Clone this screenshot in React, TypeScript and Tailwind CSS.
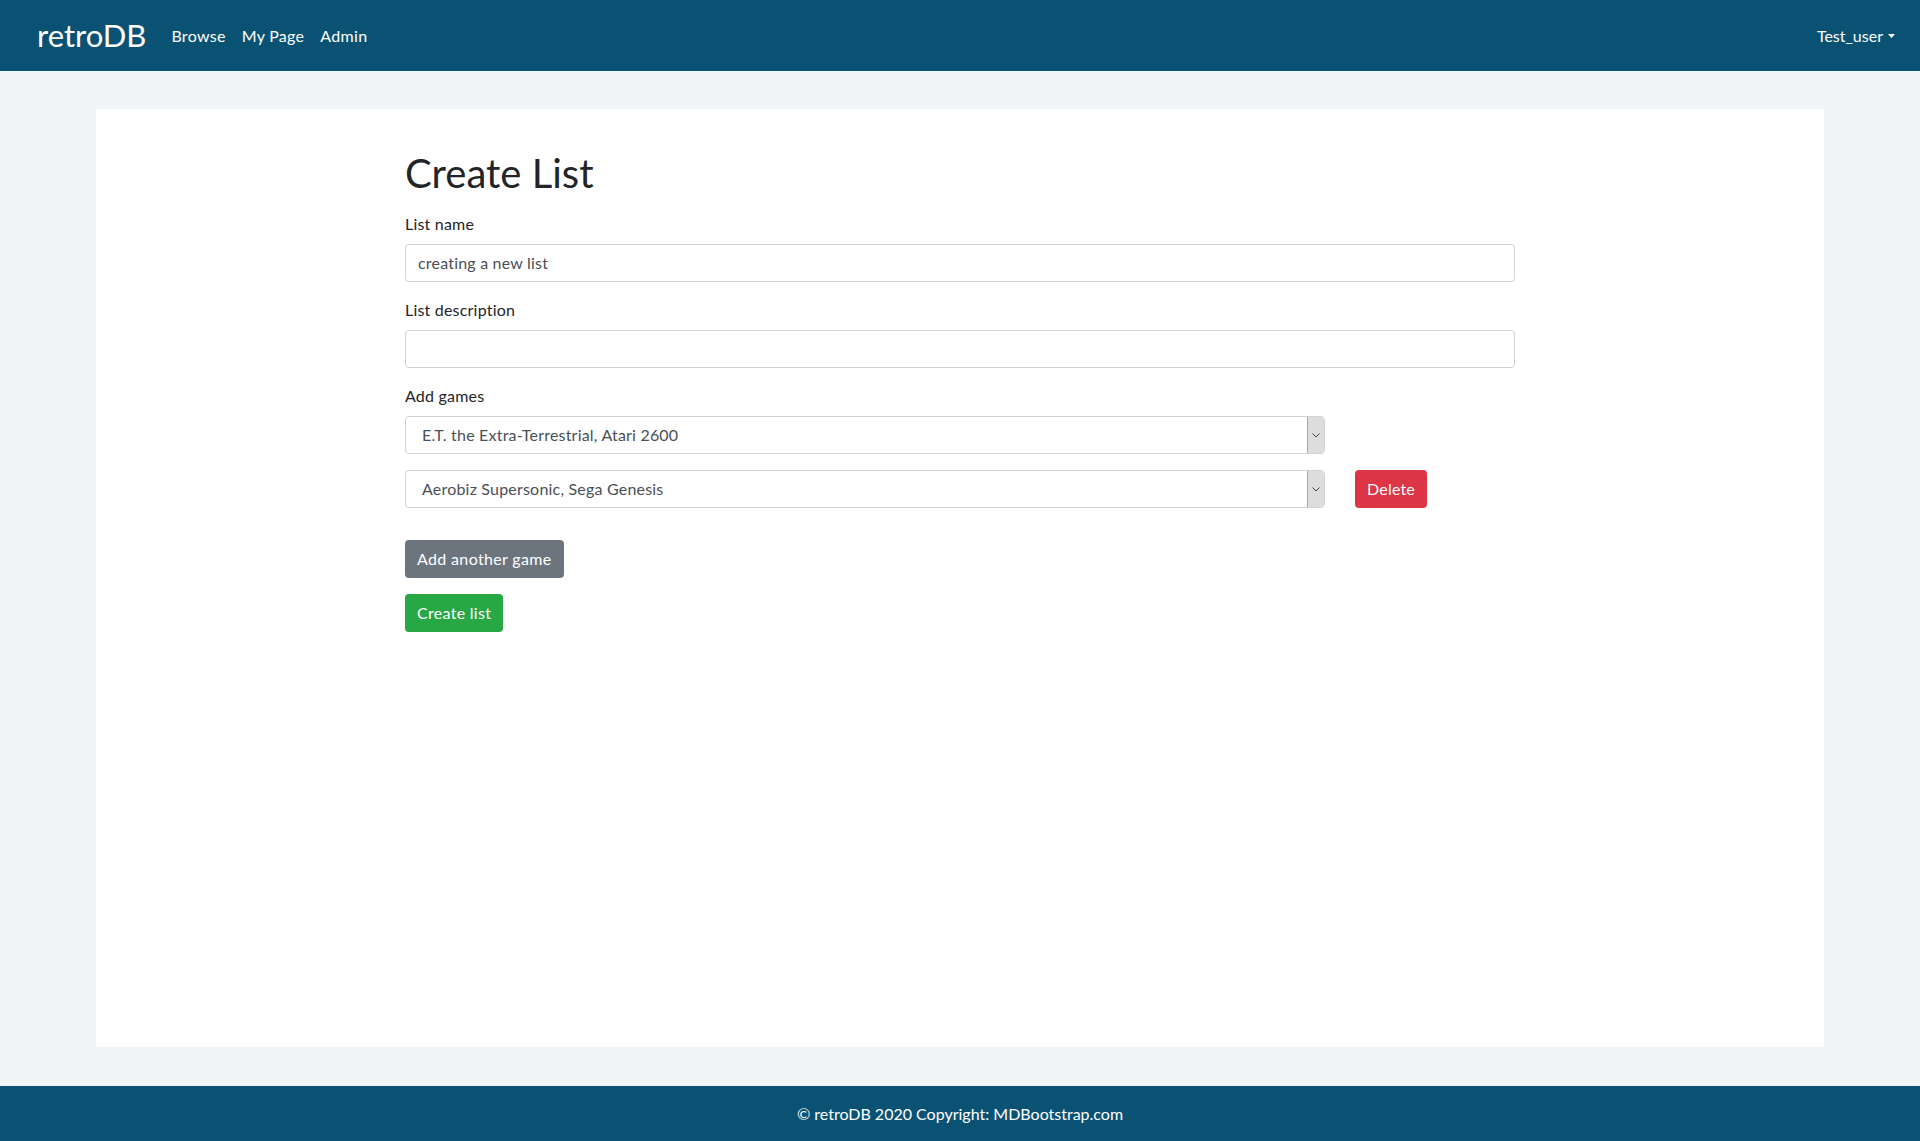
import React from "react";

// Faux native select, matching the old-style dropdown in the shot
const GameSelect = ({ value }: { value: string }) => {
    return (
        <div className="w-[920px] h-[38px] flex items-stretch border border-[#ced4da] rounded-[4px] bg-white">
            <div className="flex-1 flex items-center pl-[16px] text-[#495057] text-base tracking-[0.2px]">
                {value}
            </div>
            <div className="w-[17px] flex items-center justify-center bg-[#dddddd] border-l border-[#a6a6a6] rounded-r-[3px]">
                <svg width="8" height="5" viewBox="0 0 8 5" fill="none" xmlns="http://www.w3.org/2000/svg">
                    <path d="M0.5 0.5L4 4L7.5 0.5" stroke="#444" strokeWidth="1" />
                </svg>
            </div>
        </div>
    );
};

const Field = ({ label, value }: { label: string; value: string }) => {
    return (
        <div className="mb-4">
            <label className="block leading-6 mb-2 tracking-[0.2px]">{label}</label>
            <div className="h-[38px] flex items-center px-3 border border-[#ced4da] rounded-[4px] text-[#495057] bg-white tracking-[0.2px]">
                {value}
            </div>
        </div>
    );
};

export default function App() {
    return (
        <div className="min-h-screen flex flex-col bg-[#f1f5f8] text-[#212529] text-base font-['Lato','Open_Sans',sans-serif]">
            <nav className="h-[71px] shrink-0 bg-[#0a5274] text-white flex items-center pl-[37px] pr-[25px]">
                <span className="text-[31px] leading-none mr-[17px]">retroDB</span>
                <a className="px-2 tracking-[0.3px]">Browse</a>
                <a className="px-2 tracking-[0.3px]">My Page</a>
                <a className="px-2 tracking-[0.3px]">Admin</a>
                <div className="ml-auto flex items-center gap-[5px]">
                    <span>Test_user</span>
                    <svg width="7" height="4" viewBox="0 0 7 4" xmlns="http://www.w3.org/2000/svg">
                        <polygon points="0,0 7,0 3.5,4" fill="white" />
                    </svg>
                </div>
            </nav>

            <div className="flex-1 w-[90%] mx-auto mt-[38px] mb-[39px] bg-white">
                <div className="w-[1110px] mx-auto pt-[40px]">
                    <h1 className="text-[40px] leading-[48px] mb-[15px]">Create List</h1>

                    <Field label="List name" value="creating a new list" />
                    <Field label="List description" value="" />

                    <label className="block leading-6 mb-2 tracking-[0.2px]">Add games</label>
                    <div className="mb-4">
                        <GameSelect value="E.T. the Extra-Terrestrial, Atari 2600" />
                    </div>
                    <div className="flex items-center mb-8">
                        <GameSelect value="Aerobiz Supersonic, Sega Genesis" />
                        <button className="ml-[30px] h-[38px] px-3 rounded-[4px] bg-[#dc3545] text-white tracking-[0.2px]">
                            Delete
                        </button>
                    </div>

                    <div className="mb-4">
                        <button className="h-[38px] px-3 rounded-[4px] bg-[#6c757d] text-white tracking-[0.35px]">
                            Add another game
                        </button>
                    </div>
                    <button className="h-[38px] px-3 rounded-[4px] bg-[#28a745] text-white tracking-[0.3px]">
                        Create list
                    </button>
                </div>
            </div>

            <footer className="h-[55px] shrink-0 bg-[#0a5274] text-white flex items-center justify-center">
                © retroDB 2020 Copyright: MDBootstrap.com
            </footer>
        </div>
    );
}
